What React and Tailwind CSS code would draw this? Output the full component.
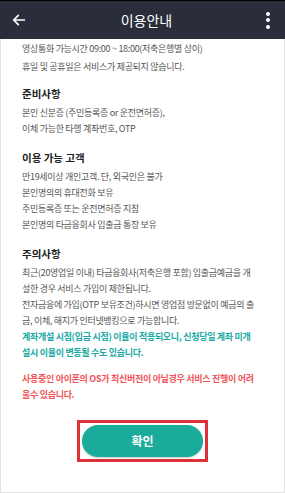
const font = { fontFamily: '"Noto Sans CJK KR", "Noto Sans", sans-serif' };

const Section = ({ title, first, children }) => (
  <div className={first ? 'mt-[10px]' : 'mt-[13px]'}>
    <h2 className="text-[10.5px] font-bold leading-[16px] text-[#222]">{title}</h2>
    <div className="mt-[3px] text-[9px] leading-[16px] text-[#555] tracking-[-0.3px]">{children}</div>
  </div>
);

export default function App() {
  return (
    <div className="w-[285px] h-[493px] bg-white flex flex-col" style={font}>
      <header className="h-[39px] bg-[#2a2e3a] border-t border-black flex items-center justify-between px-[11px] text-white">
        <svg width="16" height="16" viewBox="0 0 24 24" fill="none" stroke="white" strokeWidth="2.6" strokeLinecap="round" strokeLinejoin="round">
          <path d="M20 12H4M11 5l-7 7 7 7" />
        </svg>
        <h1 className="text-[14px] leading-none">이용안내</h1>
        <div className="flex flex-col gap-[2.5px] pr-[4px]">
          <span className="w-[4px] h-[4px] rounded-full bg-white" />
          <span className="w-[4px] h-[4px] rounded-full bg-white" />
          <span className="w-[4px] h-[4px] rounded-full bg-white" />
        </div>
      </header>
      <main className="flex-1 border-x border-b border-[#e2e2e2] pl-[21px] pr-[10px] pt-[1px]">
        <div className="text-[9px] leading-[18px] text-[#555] tracking-[-0.3px]">
          <p>영상통화 가능시간 09:00 ~ 18:00(저축은행별 상이)</p>
          <p>휴일 및 공휴일은 서비스가 제공되지 않습니다.</p>
        </div>
        <Section title="준비사항" first>
          <p>본인 신분증 (주민등록증 or 운전면허증),</p>
          <p>이체 가능한 타행 계좌번호, OTP</p>
        </Section>
        <Section title="이용 가능 고객">
          <p>만19세이상 개인고객. 단, 외국인은 불가</p>
          <p>본인명의의 휴대전화 보유</p>
          <p>주민등록증 또는 운전면허증 지참</p>
          <p>본인명의 타금융회사 입출금 통장 보유</p>
        </Section>
        <Section title="주의사항">
          <p>최근(20영업일 이내) 타금융회사(저축은행 포함) 입출금예금을 개<br />설한 경우 서비스 가입이 제한됩니다.</p>
          <p>전자금융에 가입(OTP 보유조건)하시면 영업점 방문없이 예금의 출<br />금, 이체, 해지가 인터넷뱅킹으로 가능합니다.</p>
          <p className="font-bold text-[#1aa9a4]">계좌개설 시점(입금 시점) 이율이 적용되오니, 신청당일 계좌 미개<br />설시 이율이 변동될 수도 있습니다.</p>
        </Section>
        <p className="mt-[10px] text-[9px] leading-[16px] font-bold text-[#f0555a] tracking-[-0.3px]">
          사용중인 아이폰의 OS가 최신버전이 아닐경우 서비스 진행이 어려<br />울수 있습니다.
        </p>
        <div className="mt-[17px] flex justify-center pr-[11px]">
          <div className="border-[3px] border-[#dc3237] p-[2px]">
            <button className="w-[121px] h-[32px] rounded-full bg-[#1aab9b] text-white text-[12px] font-bold shadow-[0_1px_2px_rgba(0,0,0,0.2)]">
              확인
            </button>
          </div>
        </div>
      </main>
    </div>
  );
}
